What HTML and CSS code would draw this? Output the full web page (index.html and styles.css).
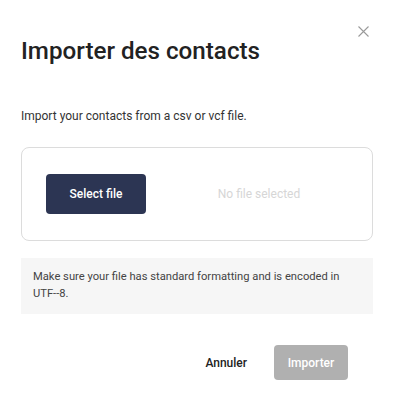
FILE: index.html
```html
<!DOCTYPE html>
<html lang="fr">
<head>
<meta charset="utf-8">
<link rel="stylesheet" href="styles.css">
</head>
<body>
<div class="dialog">
  <div class="header">
    <h1 class="title">Importer des contacts</h1>
    <button class="close" aria-label="Fermer">
      <svg width="11" height="11" viewBox="0 0 11 11"><path d="M0.5 0.5 L10.5 10.5 M10.5 0.5 L0.5 10.5" stroke="#9a9a9a" stroke-width="1.1" fill="none"/></svg>
    </button>
  </div>
  <p class="desc">Import your contacts from a csv or vcf file.</p>
  <div class="dropzone">
    <button class="select-btn">Select file</button>
    <span class="no-file">No file selected</span>
  </div>
  <div class="note">Make sure your file has standard formatting and is encoded in UTF--8.</div>
  <div class="footer">
    <button class="cancel">Annuler</button>
    <button class="import" disabled>Importer</button>
  </div>
</div>
</body>
</html>
```
FILE: styles.css
```css
html, body {
  margin: 0;
  padding: 0;
  background: #fff;
}
body {
  font-family: Roboto, "Liberation Sans", sans-serif;
  color: #222;
}
.dialog {
  width: 397px;
  box-sizing: border-box;
  padding: 0 24px 0 21px;
}
.header {
  display: flex;
  justify-content: space-between;
  align-items: flex-start;
}
.title {
  margin: 37px 0 0 0;
  font-size: 24.2px;
  line-height: 28px;
  font-weight: 500;
  color: #222;
}
.close {
  margin: 26px 4px 0 0;
  padding: 0;
  border: 0;
  background: none;
  width: 11px;
  height: 11px;
  display: flex;
}
.desc {
  margin: 43px 0 0 0;
  font-size: 12px;
  line-height: 16px;
  color: #333;
}
.dropzone {
  margin-top: 23px;
  height: 94px;
  box-sizing: border-box;
  border: 1px solid #dcdcdc;
  border-radius: 8px;
  padding: 0 0 0 24px;
  display: flex;
  align-items: center;
}
.select-btn {
  width: 100px;
  height: 40px;
  border: 0;
  border-radius: 4px;
  background: #2c3553;
  color: #fff;
  font-family: inherit;
  font-size: 12px;
  font-weight: 500;
  padding: 0;
}
.no-file {
  flex: 1;
  text-align: center;
  font-size: 12px;
  color: #d6d6d6;
}
.note {
  margin-top: 17px;
  background: #f6f6f6;
  padding: 10px 30px 12px 12px;
  font-size: 11.2px;
  line-height: 17px;
  color: #444;
}
.footer {
  margin-top: 31px;
  padding-right: 25px;
  display: flex;
  justify-content: flex-end;
  align-items: center;
  gap: 11px;
}
.cancel {
  border: 0;
  background: none;
  font-family: inherit;
  font-size: 12px;
  font-weight: 500;
  color: #222;
  padding: 0 16px;
  height: 35px;
}
.import {
  width: 74px;
  height: 35px;
  border: 0;
  border-radius: 4px;
  background: #b0b0b0;
  color: #fff;
  font-family: inherit;
  font-size: 12px;
  font-weight: 500;
  padding: 0;
}
```
